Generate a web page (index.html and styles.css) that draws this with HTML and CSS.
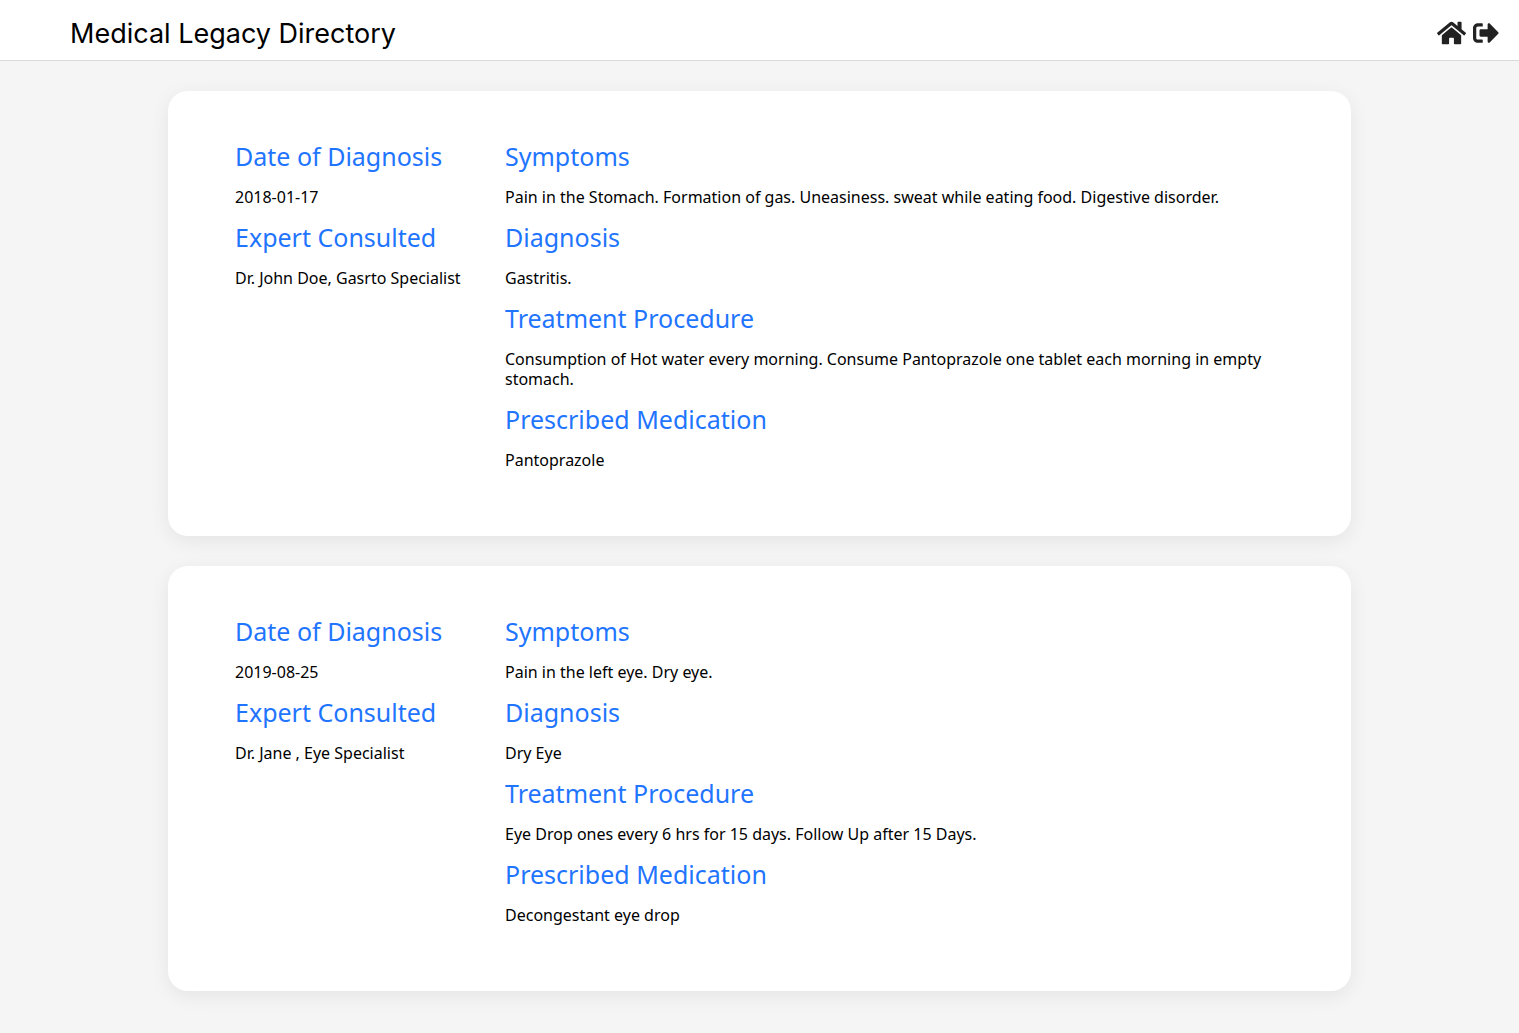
FILE: index.html
```html
<!DOCTYPE html>
<html lang="en">
<head>
  <meta charset="utf-8">
  <meta name="viewport" content="width=device-width, initial-scale=1">
  <title>Medical Legacy Directory</title>
  <link rel="stylesheet" href="styles.css">
</head>
<body>
  <header class="navbar">
    <h1 class="brand">Medical Legacy Directory</h1>
    <nav class="nav-links">
      <a href="#home" aria-label="Home">
        <svg class="icon icon-home" viewBox="0 0 576 512" aria-hidden="true"><path d="M280.37 148.26L96 300.11V464a16 16 0 0 0 16 16l112.06-.29a16 16 0 0 0 15.92-16V368a16 16 0 0 1 16-16h64a16 16 0 0 1 16 16v95.64a16 16 0 0 0 16 16.05L464 480a16 16 0 0 0 16-16V300L295.67 148.26a12.19 12.19 0 0 0-15.3 0zM571.6 251.47L488 182.56V44.05a12 12 0 0 0-12-12h-56a12 12 0 0 0-12 12v72.61L318.47 43a48 48 0 0 0-61 0L4.34 251.47a12 12 0 0 0-1.6 16.9l25.5 31A12 12 0 0 0 45.15 301l235.22-193.74a12.19 12.19 0 0 1 15.3 0L530.9 301a12 12 0 0 0 16.9-1.6l25.5-31a12 12 0 0 0-1.7-16.93z"/></svg>
      </a>
      <a href="#logout" aria-label="Log out">
        <svg class="icon icon-logout" viewBox="0 0 512 512" aria-hidden="true"><path d="M497 273L329 441c-15 15-41 4.500-41-17v-96H152c-13.300 0-24-10.700-24-24v-96c0-13.300 10.700-24 24-24h136V88c0-21.400 25.900-32 41-17l168 168c9.300 9.400 9.300 24.600 0 34zM192 436v-40c0-6.600-5.400-12-12-12H96c-17.700 0-32-14.300-32-32V160c0-17.700 14.300-32 32-32h84c6.600 0 12-5.400 12-12V76c0-6.600-5.400-12-12-12H96c-53 0-96 43-96 96v192c0 53 43 96 96 96h84c6.600 0 12-5.400 12-12z"/></svg>
      </a>
    </nav>
  </header>

  <main class="records">
    <article class="card">
      <div class="column">
        <h2>Date of Diagnosis</h2>
        <p>2018-01-17</p>
        <h2>Expert Consulted</h2>
        <p>Dr. John Doe, Gasrto Specialist</p>
      </div>
      <div class="column">
        <h2>Symptoms</h2>
        <p>Pain in the Stomach. Formation of gas. Uneasiness. sweat while eating food. Digestive disorder.</p>
        <h2>Diagnosis</h2>
        <p>Gastritis.</p>
        <h2>Treatment Procedure</h2>
        <p>Consumption of Hot water every morning. Consume Pantoprazole one tablet each morning in empty stomach.</p>
        <h2>Prescribed Medication</h2>
        <p>Pantoprazole</p>
      </div>
    </article>

    <article class="card">
      <div class="column">
        <h2>Date of Diagnosis</h2>
        <p>2019-08-25</p>
        <h2>Expert Consulted</h2>
        <p>Dr. Jane , Eye Specialist</p>
      </div>
      <div class="column">
        <h2>Symptoms</h2>
        <p>Pain in the left eye. Dry eye.</p>
        <h2>Diagnosis</h2>
        <p>Dry Eye</p>
        <h2>Treatment Procedure</h2>
        <p>Eye Drop ones every 6 hrs for 15 days. Follow Up after 15 Days.</p>
        <h2>Prescribed Medication</h2>
        <p>Decongestant eye drop</p>
      </div>
    </article>
  </main>
</body>
</html>
```

FILE: styles.css
```css
* {
  box-sizing: border-box;
}

body {
  margin: 0;
  background: #f5f5f5;
  color: #000;
  font-family: "Noto Sans", "Open Sans", sans-serif;
  font-size: 16px;
  line-height: 20px;
}

.navbar {
  display: flex;
  align-items: center;
  justify-content: space-between;
  padding: 18px 20px 10px 70px;
  background: #fff;
  border-bottom: 1px solid #dadada;
}

.brand {
  margin: 0;
  font-family: Inter, sans-serif;
  font-size: 27px;
  font-weight: 400;
  line-height: 32px;
}

.nav-links {
  display: flex;
  gap: 7px;
  padding-bottom: 2px;
}

.nav-links a {
  display: flex;
  color: #222;
}

.icon {
  height: 26px;
  fill: currentColor;
}

.icon-home {
  width: 29px;
}

.icon-logout {
  width: 26px;
}

.records {
  display: grid;
  gap: 30px;
  padding: 30px 168px 40px;
}

.card {
  display: grid;
  grid-template-columns: 240px 1fr;
  column-gap: 30px;
  padding: 50px 67px 66px;
  background: #fff;
  border-radius: 20px;
  box-shadow: 0 5px 20px rgba(0, 0, 0, 0.07);
}

.column h2 {
  margin: 15px 0 16px;
  color: #1f75ff;
  font-size: 25px;
  font-weight: 400;
  line-height: 30px;
}

.column h2:first-child {
  margin-top: 0;
}

.column p {
  margin: 0;
}
```
